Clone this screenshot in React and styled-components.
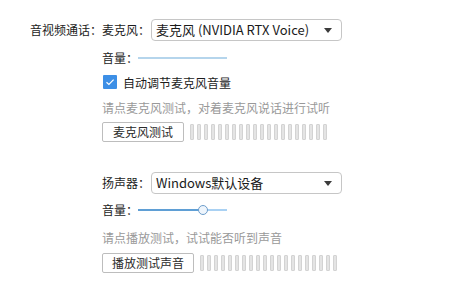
import React from 'react';
import styled, { createGlobalStyle } from 'styled-components';

const GlobalStyle = createGlobalStyle`
  html, body {
    margin: 0;
    padding: 0;
    background: #ffffff;
  }
  body {
    font-family: "Noto Sans CJK SC", "Noto Sans", sans-serif;
    font-size: 12px;
    color: #1c1c1c;
  }
`;

const Page = styled.div`
  width: 454px;
  height: 293px;
  display: flex;
  align-items: flex-start;
  padding-top: 19px;
  box-sizing: border-box;
  overflow: hidden;
`;

const SectionLabel = styled.div`
  width: 102px;
  flex: none;
  text-align: right;
  height: 22px;
  line-height: 22px;
  white-space: nowrap;
`;

const Content = styled.div`
  display: flex;
  flex-direction: column;
`;

const Row = styled.div`
  display: flex;
  align-items: center;
  height: ${(p) => p.h}px;
  margin-top: ${(p) => p.mt || 0}px;
  white-space: nowrap;
`;

const FieldLabel = styled.span`
  width: ${(p) => p.w}px;
  flex: none;
  line-height: 16px;
`;

const SelectBox = styled.div`
  width: 191px;
  height: 22px;
  margin-left: 1px;
  box-sizing: border-box;
  border: 1px solid #c6c6c6;
  border-radius: 4px;
  display: flex;
  align-items: center;
  justify-content: space-between;
  padding: 0 9px 0 4px;
  font-size: 13px;
  color: #1a1a1a;
  line-height: 20px;
`;

const Caret = styled.span`
  width: 0;
  height: 0;
  border-left: 4px solid transparent;
  border-right: 4px solid transparent;
  border-top: 5px solid #3c3c3c;
`;

const Track = styled.div`
  position: relative;
  width: 89px;
  height: 2px;
  background: ${(p) => p.color};
`;

const TrackFill = styled.div`
  position: absolute;
  left: 0;
  top: 0;
  height: 2px;
  background: #5f9fd5;
`;

const Thumb = styled.div`
  position: absolute;
  top: -4px;
  width: 10px;
  height: 10px;
  margin-left: -5px;
  box-sizing: border-box;
  border-radius: 50%;
  border: 1px solid #6d9dcb;
  background: #eef5fc;
`;

const CheckBox = styled.span`
  width: 14px;
  height: 14px;
  margin-left: 1px;
  margin-right: 6px;
  background: #3d8fe6;
  border-radius: 1px;
  display: flex;
  align-items: center;
  justify-content: center;
`;

const Hint = styled.span`
  color: #999999;
  line-height: 16px;
`;

const TestButton = styled.div`
  height: 20px;
  box-sizing: border-box;
  border: 1px solid #bdbdbd;
  border-radius: 2px;
  background: #ffffff;
  padding: 0 ${(p) => p.px}px;
  line-height: 18px;
  color: #2a2a2a;
`;

const Meter = styled.div`
  display: flex;
  gap: 3px;
  margin-left: 6px;
`;

const MeterBar = styled.span`
  width: 4px;
  height: 16px;
  box-sizing: border-box;
  border: 1px solid #d3d3d3;
  background: #e4e4e4;
  border-radius: 1px;
`;

function Slider({ value, active }) {
  if (!active) return <Track color="#b5d5ec" />;
  return (
    <Track color="#a9d1f3">
      <TrackFill style={{ width: `${value}%` }} />
      <Thumb style={{ left: `${value}%` }} />
    </Track>
  );
}

function LevelMeter() {
  return (
    <Meter>
      {Array.from({ length: 20 }).map((_, i) => (
        <MeterBar key={i} />
      ))}
    </Meter>
  );
}

function App() {
  return (
    <>
      <GlobalStyle />
      <Page>
        <SectionLabel>音视频通话：</SectionLabel>
        <Content>
          <Row h={22}>
            <FieldLabel w={48}>麦克风：</FieldLabel>
            <SelectBox>
              <span>麦克风 (NVIDIA RTX Voice)</span>
              <Caret />
            </SelectBox>
          </Row>
          <Row h={16} mt={9}>
            <FieldLabel w={36}>音量：</FieldLabel>
            <Slider active={false} />
          </Row>
          <Row h={16} mt={8}>
            <CheckBox>
              <svg width="10" height="8" viewBox="0 0 10 8">
                <path d="M1.5 4.2 L3.9 6.4 L8.6 1.6" fill="none" stroke="#ffffff" strokeWidth="1.2" />
              </svg>
            </CheckBox>
            <span>自动调节麦克风音量</span>
          </Row>
          <Row h={16} mt={10}>
            <Hint>请点麦克风测试，对着麦克风说话进行试听</Hint>
          </Row>
          <Row h={20} mt={6}>
            <TestButton px={10}>麦克风测试</TestButton>
            <LevelMeter />
          </Row>

          <Row h={22} mt={30}>
            <FieldLabel w={48}>扬声器：</FieldLabel>
            <SelectBox>
              <span>Windows默认设备</span>
              <Caret />
            </SelectBox>
          </Row>
          <Row h={16} mt={8}>
            <FieldLabel w={36}>音量：</FieldLabel>
            <Slider active value={73} />
          </Row>
          <Row h={16} mt={12}>
            <Hint>请点播放测试，试试能否听到声音</Hint>
          </Row>
          <Row h={20} mt={7}>
            <TestButton px={9}>播放测试声音</TestButton>
            <LevelMeter />
          </Row>
        </Content>
      </Page>
    </>
  );
}

export default App;
